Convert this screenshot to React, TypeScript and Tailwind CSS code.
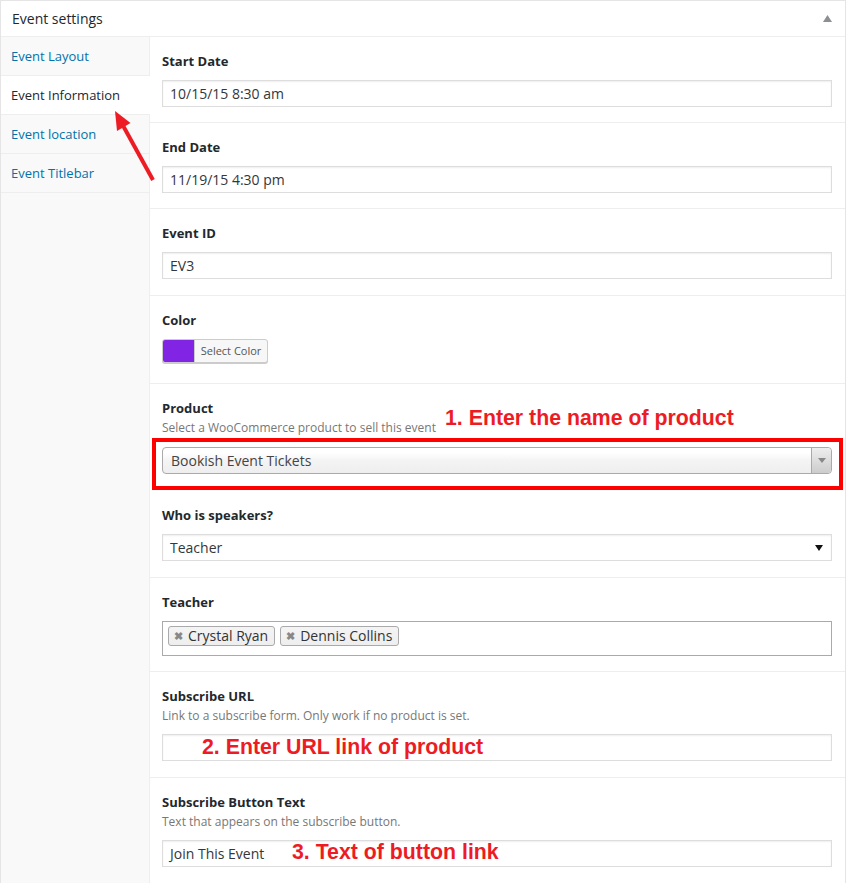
import React from "react";

const inputCls =
  "h-[27px] w-full border border-[#ddd] bg-white px-[7px] text-[14px] leading-[25px] text-[#32373c] shadow-[inset_0_1px_2px_rgba(0,0,0,0.07)]";

const noteCls =
  "font-['Liberation_Sans',Arial,sans-serif] text-[21.3px] font-bold leading-[24px] text-[#ed1c24] whitespace-nowrap";

function Label({ children }: { children: React.ReactNode }) {
  return <div className="text-[13px] font-bold leading-[20px] text-[#23282d]">{children}</div>;
}

function Desc({ children }: { children: React.ReactNode }) {
  return <div className="mt-[1px] text-[12px] leading-[18px] text-[#777]">{children}</div>;
}

function Tag({ name }: { name: string }) {
  return (
    <div className="flex h-[20px] items-center gap-[5px] rounded-[3px] border border-[#aaa] bg-[linear-gradient(#f4f4f4,#eee)] pl-[5px] pr-[6px] text-[14px] leading-[18px] text-[#333]">
      <span className="text-[11px] font-bold text-[#888]">✖</span>
      <span>{name}</span>
    </div>
  );
}

export default function App() {
  const tabs = ["Event Layout", "Event Information", "Event location", "Event Titlebar"];
  return (
    <div className="relative min-h-[883px] w-[847px] bg-white font-['Open_Sans',sans-serif]">
      <div className="w-[846px] border border-[#e5e5e5] bg-white shadow-[0_1px_1px_rgba(0,0,0,0.04)]">
        {/* header */}
        <div className="flex h-[36px] items-center justify-between border-b border-[#eee] pl-[11px] pr-[13px]">
          <span className="text-[14px] text-[#23282d]">Event settings</span>
          <svg width="9" height="7" viewBox="0 0 9 7">
            <polygon points="4.5,0 9,7 0,7" fill="#8c8f94" />
          </svg>
        </div>
        <div className="flex">
          {/* sidebar */}
          <div className="w-[149px] shrink-0 border-r border-[#eee] bg-[#f9f9f9]">
            {tabs.map((t, i) => (
              <div
                key={t}
                className={
                  i === 1
                    ? "relative -mr-px flex h-[39px] items-center border-b border-[#eee] bg-white pl-[10px] pt-[2px] text-[13px] text-[#23282d]"
                    : "flex h-[39px] items-center border-b border-[#eee] pl-[10px] pt-[2px] text-[13px] text-[#0073aa]"
                }
              >
                {t}
              </div>
            ))}
          </div>
          {/* content */}
          <div className="flex-1">
            <div className="border-b border-[#eee] pl-3 pr-[13px] pb-[15px] pt-[14px]">
              <Label>Start Date</Label>
              <div className={"mt-[9px] " + inputCls}>10/15/15 8:30 am</div>
            </div>
            <div className="border-b border-[#eee] pl-3 pr-[13px] pb-[15px] pt-[14px]">
              <Label>End Date</Label>
              <div className={"mt-[9px] " + inputCls}>11/19/15 4:30 pm</div>
            </div>
            <div className="border-b border-[#eee] pl-3 pr-[13px] pb-[16px] pt-[14px]">
              <Label>Event ID</Label>
              <div className={"mt-[9px] " + inputCls}>EV3</div>
            </div>
            <div className="border-b border-[#eee] pl-3 pr-[13px] pb-[20px] pt-[14px]">
              <Label>Color</Label>
              <div className="mt-[9px] flex h-[24px] w-[106px] overflow-hidden rounded-[3px] border border-[#ccc] bg-[#f7f7f7] shadow-[0_1px_0_#ccc]">
                <div className="w-[31px] bg-[#8224e3]" />
                <div className="flex flex-1 items-center justify-center border-l border-[#ccc] text-[11px] text-[#555]">
                  Select Color
                </div>
              </div>
            </div>
            <div className="relative pl-3 pr-[13px] pb-[17px] pt-[14px]">
              <Label>Product</Label>
              <Desc>Select a WooCommerce product to sell this event</Desc>
              <div className={"absolute left-[295px] top-[22px] " + noteCls}>1. Enter the name of product</div>
              <div className="relative mt-[10px]">
                <div className="flex h-[27px] w-full items-center rounded-[4px] border border-[#aaa] bg-[linear-gradient(#fff_20%,#f4f4f4_50%,#eee_100%)]">
                  <span className="flex-1 pl-[8px] text-[14px] text-[#444]">Bookish Event Tickets</span>
                  <div className="flex h-full w-[20px] items-center justify-center rounded-r-[4px] border-l border-[#aaa] bg-[linear-gradient(#eee,#ccc)]">
                    <svg width="8" height="5" viewBox="0 0 8 5">
                      <polygon points="0,0 8,0 4,5" fill="#888" />
                    </svg>
                  </div>
                </div>
                <div className="pointer-events-none absolute -bottom-[16px] -left-[10px] -right-[11px] -top-[9px] border-4 border-[#ff0000]" />
              </div>
            </div>
            <div className="border-b border-[#eee] pl-3 pr-[13px] pb-[16px] pt-[14px]">
              <Label>Who is speakers?</Label>
              <div className={"mt-[9px] flex items-center justify-between " + inputCls}>
                <span>Teacher</span>
                <svg width="8" height="6" viewBox="0 0 8 6" className="mr-[1px]">
                  <polygon points="0,0 8,0 4,6" fill="#111" />
                </svg>
              </div>
            </div>
            <div className="border-b border-[#eee] pl-3 pr-[13px] pb-[15px] pt-[14px]">
              <Label>Teacher</Label>
              <div className="mt-[9px] flex h-[35px] w-full items-start gap-[5px] border border-[#aaa] bg-white pl-[5px] pt-[4px]">
                <Tag name="Crystal Ryan" />
                <Tag name="Dennis Collins" />
              </div>
            </div>
            <div className="border-b border-[#eee] pl-3 pr-[13px] pb-[16px] pt-[14px]">
              <Label>Subscribe URL</Label>
              <Desc>Link to a subscribe form. Only work if no product is set.</Desc>
              <div className={"relative mt-[9px] " + inputCls}>
                <span className={"absolute left-[39px] top-0 " + noteCls}>2. Enter URL link of product</span>
              </div>
            </div>
            <div className="pl-3 pr-[13px] pb-[30px] pt-[14px]">
              <Label>Subscribe Button Text</Label>
              <Desc>Text that appears on the subscribe button.</Desc>
              <div className={"relative mt-[9px] " + inputCls}>
                <span>Join This Event</span>
                <span className={"absolute left-[129px] -top-[1px] " + noteCls}>3. Text of button link</span>
              </div>
            </div>
          </div>
        </div>
      </div>
      {/* arrow annotation */}
      <svg className="pointer-events-none absolute left-0 top-0" width="847" height="883">
        <line x1="153" y1="180" x2="123.5" y2="126.5" stroke="#ed1c24" strokeWidth="4" />
        <polygon points="115,111 130.5,123 117,131" fill="#ed1c24" />
      </svg>
    </div>
  );
}
